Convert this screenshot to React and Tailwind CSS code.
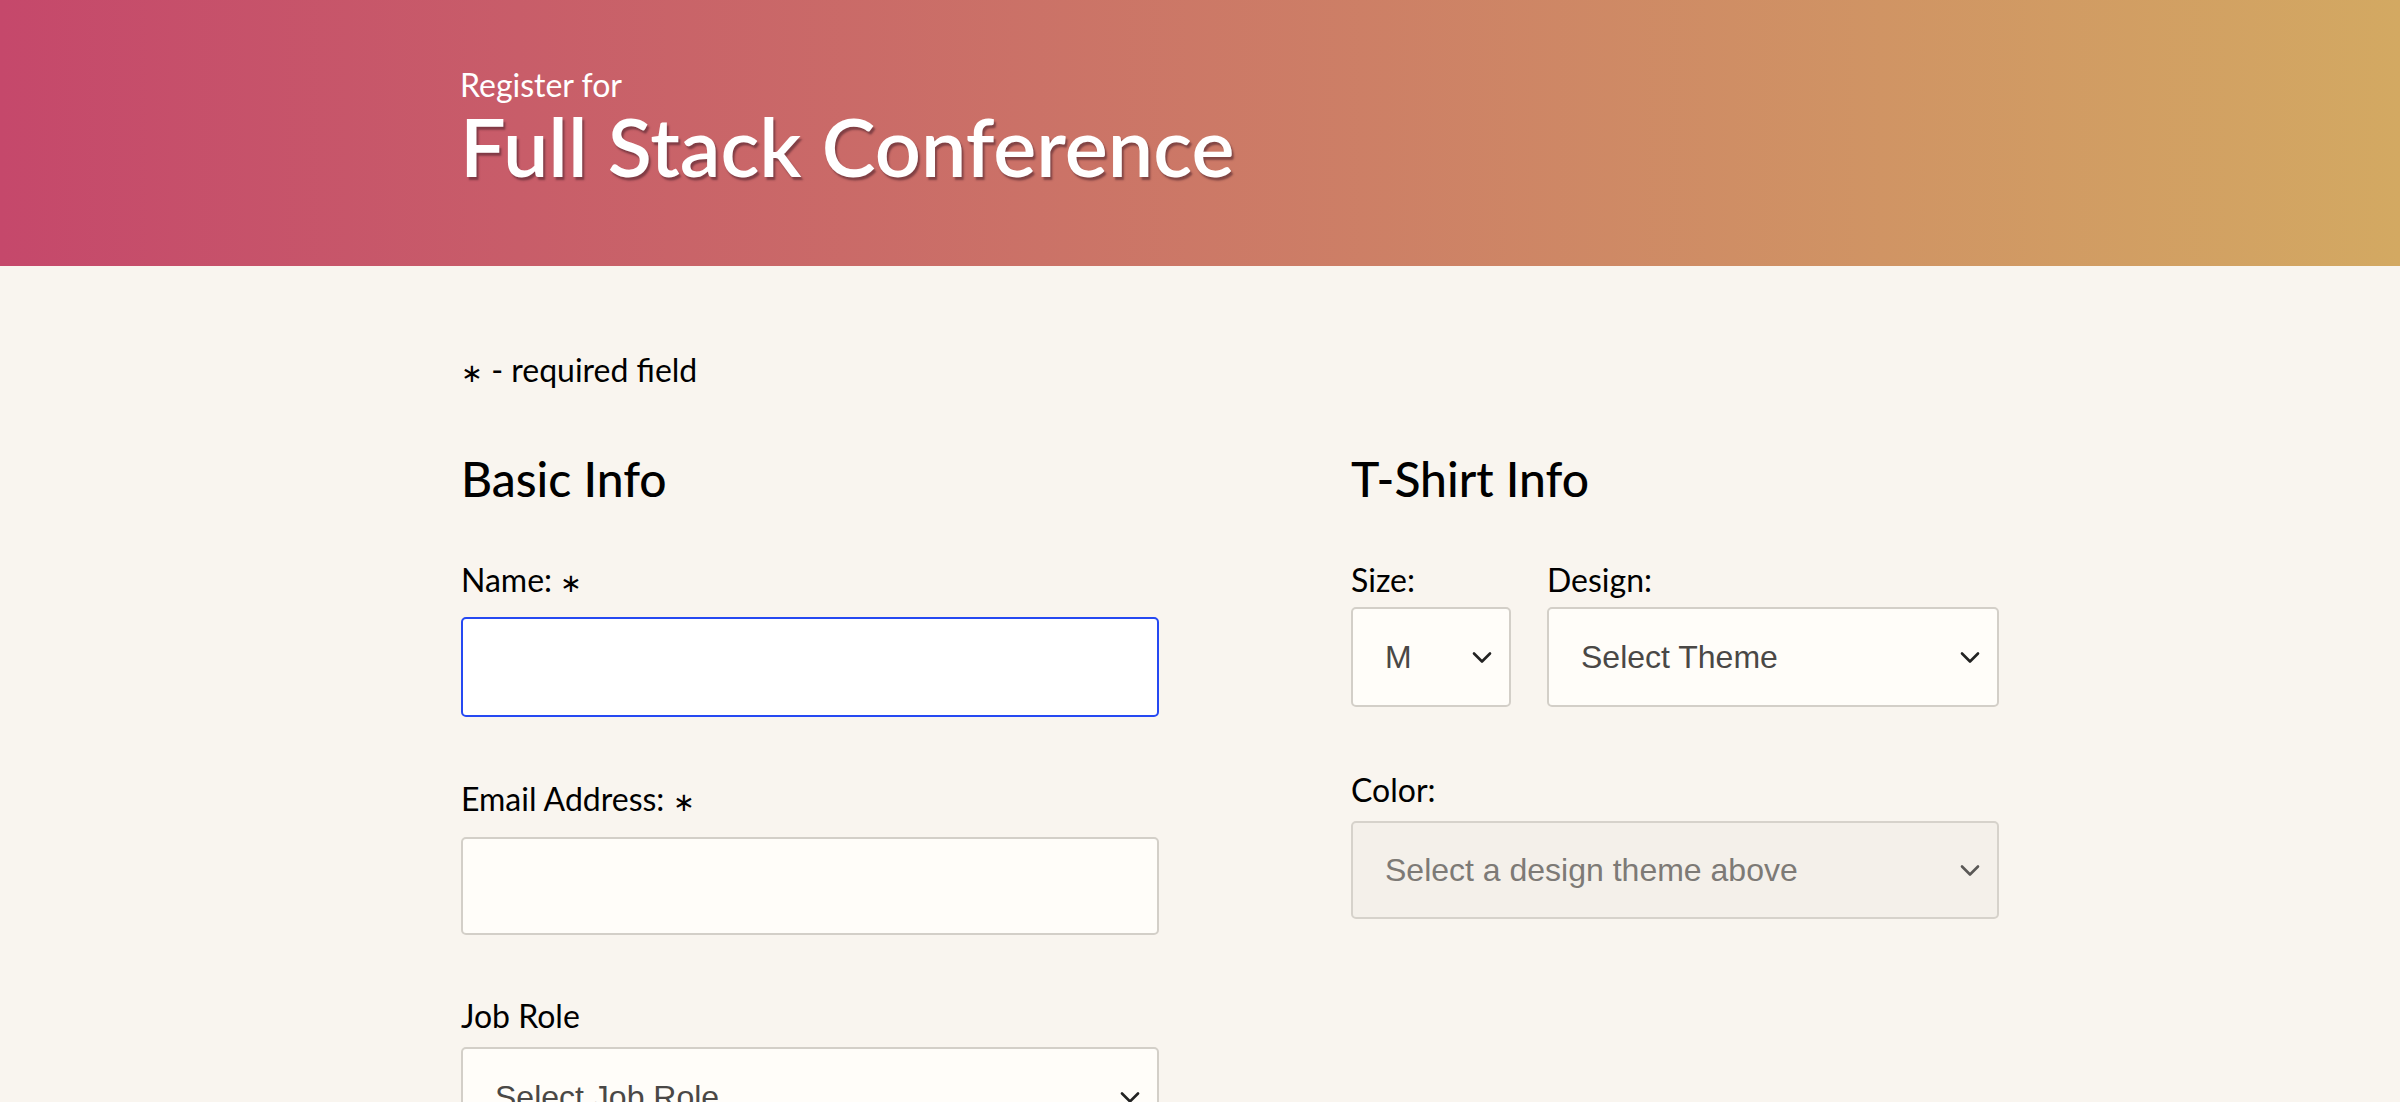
import React from "react";

const label = "block text-[32px] leading-[32px] text-black font-['Lato',sans-serif]";
const fieldBase =
  "flex items-center justify-between pl-[32px] pr-[17px] border-2 rounded-[5px] text-[32px] font-['Liberation_Sans',Arial,sans-serif]";

function Chevron({ color = "#222" }) {
  return (
    <svg width="20" height="13" viewBox="0 0 20 13" fill="none">
      <path
        d="M2 2.5 L10 10.5 L18 2.5"
        stroke={color}
        strokeWidth="2.6"
        strokeLinecap="round"
        strokeLinejoin="round"
      />
    </svg>
  );
}

function FakeSelect({ value, className = "", disabled }) {
  return (
    <div
      className={`${fieldBase} h-[100px] ${
        disabled
          ? "bg-[#f4f0ea] border-[#d6d2cb] text-[#7d7a76]"
          : "bg-[#fffdf9] border-[#d3cfc8] text-[#4a4846]"
      } ${className}`}
    >
      <span>{value}</span>
      <Chevron color={disabled ? "#5a5856" : "#222"} />
    </div>
  );
}

export default function App() {
  return (
    <div className="h-screen overflow-hidden bg-[#f9f5ef] font-['Lato',sans-serif]">
      {/* Header */}
      <header className="h-[266px] bg-[linear-gradient(to_right,#c5486b,#d3a962)] pl-[460px] pt-[69px] text-white">
        <p className="text-[32px] leading-[32px]">Register for</p>
        <h1 className="mt-[5px] text-[81px] leading-[80px] font-semibold [text-shadow:2px_3px_2px_rgba(70,30,40,0.55)]">
          Full Stack Conference
        </h1>
      </header>

      {/* Form */}
      <main className="pl-[461px]">
        <p className="mt-[88px] text-[32px] leading-[32px] text-black">
          <span className="text-[26px]">∗</span> - required field
        </p>

        <div className="mt-[67px] flex gap-[192px]">
          {/* Basic info */}
          <section className="w-[698px]">
            <h2 className="text-[48px] leading-[48px] font-medium text-black">Basic Info</h2>

            <label className={`${label} mt-[61px]`}>
              Name: <span className="text-[26px]">∗</span>
            </label>
            <input
              type="text"
              className="mt-[19px] block w-full h-[100px] rounded-[5px] border-2 border-[#2649f2] bg-white outline-none"
            />

            <label className={`${label} mt-[66px]`}>
              Email Address: <span className="text-[26px]">∗</span>
            </label>
            <input
              type="email"
              className="mt-[20px] block w-full h-[98px] rounded-[5px] border-2 border-[#d3cfc8] bg-[#fffdf9] outline-none"
            />

            <label className={`${label} mt-[65px]`}>Job Role</label>
            <FakeSelect value="Select Job Role" className="mt-[15px]" />
          </section>

          {/* T-shirt info */}
          <section className="w-[648px]">
            <h2 className="text-[48px] leading-[48px] font-medium text-black">T-Shirt Info</h2>

            <div className="mt-[61px] flex gap-[36px]">
              <div className="w-[160px]">
                <label className={label}>Size:</label>
                <FakeSelect value="M" className="mt-[11px]" />
              </div>
              <div className="w-[452px]">
                <label className={label}>Design:</label>
                <FakeSelect value="Select Theme" className="mt-[11px]" />
              </div>
            </div>

            <label className={`${label} mt-[67px]`}>Color:</label>
            <FakeSelect
              value="Select a design theme above"
              className="mt-[15px] !h-[98px]"
              disabled
            />
          </section>
        </div>
      </main>
    </div>
  );
}
